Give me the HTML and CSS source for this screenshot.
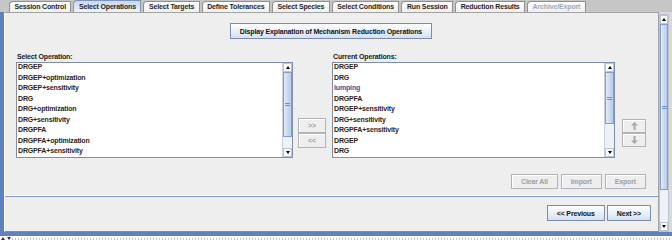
FILE: index.html
```html
<!DOCTYPE html>
<html lang="en">
<head>
    <meta charset="UTF-8">
    <title>Mechanism Reduction - Select Operations</title>
    <link rel="stylesheet" href="styles.css">
</head>
<body>
<div class="window">
    <div class="tabs">
        <div class="tab">Session Control</div>
        <div class="tab active">Select Operations</div>
        <div class="tab">Select Targets</div>
        <div class="tab">Define Tolerances</div>
        <div class="tab">Select Species</div>
        <div class="tab">Select Conditions</div>
        <div class="tab">Run Session</div>
        <div class="tab">Reduction Results</div>
        <div class="tab disabled">Archive/Export</div>
    </div>

    <div class="frame">
        <div class="panel">
            <div class="ops">
                <div class="explain-row">
                    <button class="btn">Display Explanation of Mechanism Reduction Operations</button>
                </div>

                <div class="lists">
                    <div class="list-col left">
                        <div class="label">Select Operation:</div>
                        <div class="listbox">
                            <ul class="items">
                                <li>DRGEP</li>
                                <li>DRGEP+optimization</li>
                                <li>DRGEP+sensitivity</li>
                                <li>DRG</li>
                                <li>DRG+optimization</li>
                                <li>DRG+sensitivity</li>
                                <li>DRGPFA</li>
                                <li>DRGPFA+optimization</li>
                                <li>DRGPFA+sensitivity</li>
                                <li>lumping</li>
                            </ul>
                            <div class="vscroll">
                                <div class="arrow up"></div>
                                <div class="thumb" style="height: 65px"><span class="grip"></span></div>
                                <div class="track"></div>
                                <div class="arrow down"></div>
                            </div>
                        </div>
                    </div>

                    <div class="move">
                        <button class="btn" disabled>&gt;&gt;</button>
                        <button class="btn" disabled>&lt;&lt;</button>
                    </div>

                    <div class="list-col right">
                        <div class="label">Current Operations:</div>
                        <div class="listbox">
                            <ul class="items">
                                <li>DRGEP</li>
                                <li>DRG</li>
                                <li class="blue">lumping</li>
                                <li>DRGPFA</li>
                                <li>DRGEP+sensitivity</li>
                                <li>DRG+sensitivity</li>
                                <li>DRGPFA+sensitivity</li>
                                <li>DRGEP</li>
                                <li>DRG</li>
                                <li>DRGPFA</li>
                            </ul>
                            <div class="vscroll">
                                <div class="arrow up"></div>
                                <div class="thumb" style="height: 52px"><span class="grip"></span></div>
                                <div class="track"></div>
                                <div class="arrow down"></div>
                            </div>
                        </div>
                    </div>

                    <div class="order">
                        <button class="btn" disabled>
                            <svg width="7" height="8" viewBox="0 0 7 8"><path d="M3.5 0 L7 3.5 H4.5 V8 H2.5 V3.5 H0 Z"/></svg>
                        </button>
                        <button class="btn" disabled>
                            <svg width="7" height="8" viewBox="0 0 7 8"><path d="M3.5 8 L7 4.5 H4.5 V0 H2.5 V4.5 H0 Z"/></svg>
                        </button>
                    </div>
                </div>

                <div class="actions">
                    <button class="btn" disabled>Clear All</button>
                    <button class="btn" disabled>Import</button>
                    <button class="btn" disabled>Export</button>
                </div>
            </div>

            <div class="nav">
                <button class="btn">&lt;&lt; Previous</button>
                <button class="btn">Next &gt;&gt;</button>
            </div>
        </div>

        <div class="vscroll main">
            <div class="arrow up"></div>
            <div class="thumb" style="height: 166px"><span class="grip"></span></div>
            <div class="track"></div>
            <div class="arrow down"></div>
        </div>
    </div>

    <div class="status">
        <svg class="status-arrows" width="12" height="6" viewBox="0 0 12 6">
            <path d="M1 4 L3 1 L5 4 Z"/>
            <path d="M7 1 L11 1 L9 4 Z"/>
        </svg>
    </div>
</div>
</body>
</html>
```

FILE: styles.css
```css
* {
    box-sizing: border-box;
}
body {
    margin: 0;
    background: #c6c6c6;
    font-family: "Liberation Sans", Arial, sans-serif;
    font-size: 7px;
    font-weight: bold;
    letter-spacing: -0.15px;
    color: #1e1e1e;
}
.window {
    width: 672px;
    height: 242px;
    display: flex;
    flex-direction: column;
    overflow: hidden;
}

/* tab strip */
.tabs {
    display: flex;
    align-items: flex-end;
    gap: 2px;
    height: 12px;
    padding-left: 9px;
    background: #c6c6c6;
}
.tab {
    height: 11px;
    padding: 0 4.5px;
    line-height: 10px;
    border: 1px solid #8f8f8f;
    border-bottom: none;
    border-top-left-radius: 4px;
    background: linear-gradient(#ffffff, #efefef);
    white-space: nowrap;
}
.tab.active {
    height: 12px;
    line-height: 11px;
    border-color: #7f93b4;
    background: linear-gradient(#c6d8f0, #eef3fa);
}
.tab.disabled {
    color: #9ea8b8;
}

/* main frame */
.frame {
    display: flex;
    height: 224px;
    border-left: 4px solid #6080c0;
    border-bottom: 4px solid #6080c0;
    background: #d9d9d9;
}
.panel {
    width: 655px;
    display: flex;
    flex-direction: column;
    background: #eeeeee;
    border: 1px solid #a3a3a3;
    border-left-color: #ffffff;
    border-bottom-color: #8c8c8c;
}
.ops {
    height: 183px;
    padding: 10px 12px 0 11px;
    border-bottom: 1px solid #ffffff;
    display: flex;
    flex-direction: column;
}
.explain-row {
    display: flex;
    justify-content: center;
}

/* buttons */
.btn {
    height: 16px;
    padding: 0 9px;
    border: 1px solid #7b8ca8;
    background: linear-gradient(#ffffff, #d4e1f2);
    font: inherit;
    letter-spacing: inherit;
    color: #111;
    white-space: nowrap;
}
.btn:disabled {
    border-color: #b3b3b3;
    background: #eeeeee;
    color: #a0a0a0;
    box-shadow: inset 1px 1px 0 #ffffff;
}

/* lists */
.lists {
    display: flex;
    margin-top: 13px;
}
.list-col.left {
    width: 277px;
}
.list-col.right {
    width: 283px;
    margin-left: 6px;
}
.label {
    height: 10px;
    line-height: 9px;
    padding-left: 1px;
    color: #1a1a1a;
}
.listbox {
    height: 96px;
    display: flex;
    border: 1px solid #7d8ea9;
    background: #ffffff;
}
.items {
    flex: 1;
    margin: 0;
    padding: 0 0 0 1px;
    list-style: none;
    overflow: hidden;
    color: #2e2418;
}
.items li {
    height: 10.5px;
    line-height: 8px;
    white-space: nowrap;
}
.items li.blue {
    color: #245a9c;
}
.move {
    display: flex;
    flex-direction: column;
    width: 28px;
    margin: 66px 0 0 5px;
}
.move .btn {
    height: 15px;
    padding: 0;
}
.order {
    display: flex;
    flex-direction: column;
    width: 24px;
    margin: 67px 0 0 7px;
}
.order .btn {
    height: 14px;
    padding: 0;
    display: flex;
    align-items: center;
    justify-content: center;
}
.order svg {
    fill: #a8a8a8;
}
.actions {
    display: flex;
    justify-content: flex-end;
    gap: 3px;
    margin-top: 16px;
}
.actions .btn {
    height: 15px;
}
.nav {
    flex: 1;
    display: flex;
    justify-content: flex-end;
    gap: 2px;
    padding: 8px 7px 0 0;
    border-top: 1px solid #8098c4;
}

/* scrollbars */
.vscroll {
    width: 10px;
    display: flex;
    flex-direction: column;
    background: #eef1f6;
    border-left: 1px solid #c9d0dc;
}
.vscroll.main {
    margin-top: 2px;
    border: 1px solid #b9c3d3;
}
.arrow {
    height: 9px;
    flex: none;
    display: flex;
    align-items: center;
    justify-content: center;
    background: #ffffff;
    border: 1px solid #b9c3d3;
}
.arrow::before {
    content: "";
    border-left: 2.5px solid transparent;
    border-right: 2.5px solid transparent;
}
.arrow.up::before {
    border-bottom: 3px solid #000;
}
.arrow.down::before {
    border-top: 3px solid #000;
}
.thumb {
    flex: none;
    display: flex;
    align-items: center;
    justify-content: center;
    background: linear-gradient(to right, #e2eaf6, #b7cbe8);
    border: 1px solid #7f9fd0;
}
.grip {
    width: 5px;
    height: 3px;
    border-top: 1px solid #7090c8;
    border-bottom: 1px solid #7090c8;
}
.track {
    flex: 1;
}

/* status strip */
.status {
    height: 6px;
    background: #ffffff repeating-linear-gradient(90deg, #bdbdbd 0 1px, transparent 1px 3px) 0 2px / 100% 2px repeat-x;
}
.status-arrows {
    display: block;
    background: #ffffff;
    fill: #333;
}
```
